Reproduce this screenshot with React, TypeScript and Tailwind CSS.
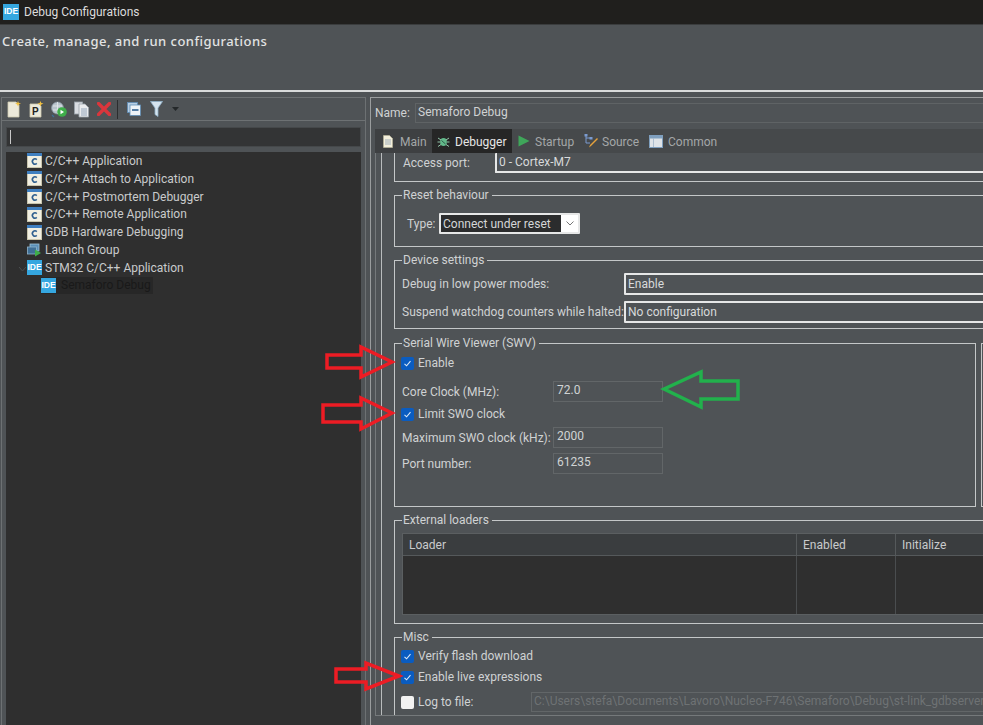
import type { ReactNode } from "react"

const treeItems = [
  "C/C++ Application",
  "C/C++ Attach to Application",
  "C/C++ Postmortem Debugger",
  "C/C++ Remote Application",
  "GDB Hardware Debugging",
]

function IdeIcon({ size = 16 }: { size?: number }) {
  return (
    <span
      className="flex shrink-0 items-center justify-center bg-[#35a7e0] text-[8.5px] font-bold leading-none text-white font-['Liberation_Sans',sans-serif]"
      style={{ width: size, height: size }}
    >
      IDE
    </span>
  )
}

function CIcon() {
  return (
    <svg width="15" height="15" viewBox="0 0 15 15" className="shrink-0">
      <rect x="0.5" y="0.5" width="14" height="14" fill="#f1efe2" stroke="#c9c5ad" />
      <rect x="0" y="0" width="15" height="3" fill="#3f7fc0" />
      <path d="M9.8 6.6 A2.6 2.6 0 1 0 9.8 10.4" fill="none" stroke="#2f5f8f" strokeWidth="1.6" />
    </svg>
  )
}

function LaunchGroupIcon() {
  return (
    <svg width="15" height="15" viewBox="0 0 15 15" className="shrink-0">
      <rect x="3" y="2" width="9" height="7" fill="#5a8fb8" stroke="#9dc0d8" strokeWidth="0.8" />
      <rect x="0.5" y="5" width="9" height="7" fill="#3f6f96" stroke="#8fb4cd" strokeWidth="0.8" />
      <path d="M8 7.5 L14 11 L8 14.5 Z" fill="#3fae4a" />
    </svg>
  )
}

function ToolbarIcons() {
  return (
    <div className="flex h-[22px] items-center pl-[5px]">
      <svg width="14" height="17" viewBox="0 0 14 17" className="shrink-0">
        <path d="M1 1 H9 L12 4 V16 H1 Z" fill="#ece9da" stroke="#cfcab0" strokeWidth="0.8" />
        <path d="M11 0 L11.8 2 L14 2.6 L11.8 3.4 L11 5.5 L10.2 3.4 L8 2.6 L10.2 2 Z" fill="#f0c040" />
      </svg>
      <svg width="15" height="17" viewBox="0 0 15 17" className="ml-[8px] shrink-0">
        <path d="M1 3 H10 L12 5 V16 H1 Z" fill="#ece9da" stroke="#cfcab0" strokeWidth="0.8" />
        <text x="3" y="14" fontSize="10" fontWeight="700" fill="#222" fontFamily="Liberation Sans">P</text>
        <path d="M11.5 0 L12.3 2 L14.5 2.6 L12.3 3.4 L11.5 5.5 L10.7 3.4 L8.5 2.6 L10.7 2 Z" fill="#f0c040" />
      </svg>
      <svg width="16" height="17" viewBox="0 0 16 17" className="ml-[7px] shrink-0">
        <circle cx="6.5" cy="7" r="6" fill="#b9c4cc" stroke="#8b98a3" strokeWidth="0.7" />
        <path d="M2 5 H11 M2 9 H11 M6.5 1 V13" stroke="#e6ebee" strokeWidth="0.8" />
        <circle cx="11" cy="11" r="4.8" fill="#3fae4a" />
        <path d="M9.5 8.8 L13 11 L9.5 13.2 Z" fill="#fff" />
        <path d="M1 14 L3 16" stroke="#3f6f96" strokeWidth="1.2" />
      </svg>
      <svg width="15" height="17" viewBox="0 0 15 17" className="ml-[7px] shrink-0">
        <rect x="0.5" y="1" width="8" height="12" fill="#d9dde2" stroke="#9aa3ab" strokeWidth="0.8" />
        <path d="M5 3 H11 L14.5 6.5 V16 H5 Z" fill="#e9ebed" stroke="#9aa3ab" strokeWidth="0.8" />
        <path d="M7 8 H13 M7 10 H13 M7 12 H13 M7 14 H13" stroke="#7f96ad" strokeWidth="0.8" />
      </svg>
      <svg width="14" height="14" viewBox="0 0 14 14" className="ml-[8px] shrink-0">
        <path d="M1.5 1.5 L12.5 12.5 M12.5 1.5 L1.5 12.5" stroke="#d9363c" strokeWidth="3.4" strokeLinecap="round" />
      </svg>
      <div className="ml-[6px] h-[19px] w-[1px] bg-[#2c2e2f]" />
      <svg width="14" height="14" viewBox="0 0 14 14" className="ml-[9px] shrink-0">
        <rect x="0.5" y="0.5" width="10" height="10" fill="#b8cfe4" stroke="#5f8db5" strokeWidth="0.8" />
        <rect x="3" y="3" width="10.5" height="10.5" fill="#eef3f7" stroke="#5f8db5" strokeWidth="0.8" />
        <path d="M5 8 H11.5" stroke="#2f5f8f" strokeWidth="1.6" />
      </svg>
      <svg width="13" height="16" viewBox="0 0 13 16" className="ml-[9px] shrink-0">
        <path d="M0.5 0.5 H12.5 L8 7 V15.5 L5 13.5 V7 Z" fill="#d5e4ef" stroke="#8fb0c8" strokeWidth="0.8" />
      </svg>
      <svg width="7" height="4" viewBox="0 0 7 4" className="ml-[9px] shrink-0">
        <path d="M0 0 H7 L3.5 4 Z" fill="#24282a" />
      </svg>
    </div>
  )
}

function Group({
  title,
  height,
  width = "w-[700px]",
  className = "",
  children,
}: {
  title: string
  height: string
  width?: string
  className?: string
  children: ReactNode
}) {
  return (
    <fieldset className={`shrink-0 border border-[#c4c7c8] ${height} ${width} ${className}`}>
      <legend className="ml-[7px] pl-[1px] pr-[3px] text-[12px] leading-[16px] text-[#cfd2d3]">
        {title}
      </legend>
      {children}
    </fieldset>
  )
}

function Check({ on = true }: { on?: boolean }) {
  if (!on) {
    return <span className="block h-[13px] w-[13px] shrink-0 rounded-[2px] bg-[#f2f2f2]" />
  }
  return (
    <span className="flex h-[13px] w-[13px] shrink-0 items-center justify-center rounded-[2px] bg-[#0a5cc0]">
      <svg width="9" height="9" viewBox="0 0 9 9">
        <path d="M1.5 4.8 L3.6 6.8 L7.5 2.2" fill="none" stroke="#dbe8f6" strokeWidth="1.1" />
      </svg>
    </span>
  )
}

function CheckRow({ label, on, className = "" }: { label: string; on?: boolean; className?: string }) {
  return (
    <div className={`-ml-[1px] flex h-[13px] items-center gap-[4px] ${className}`}>
      <Check on={on} />
      <span className="whitespace-nowrap text-[12px] leading-[13px] text-[#cfd2d3]">{label}</span>
    </div>
  )
}

function WhiteField({ value, className = "" }: { value: string; className?: string }) {
  return (
    <div className={`flex items-center rounded-[1px] border-2 border-[#e6e7e7] pl-[2px] text-[12px] text-[#d8dadb] ${className}`}>
      {value}
    </div>
  )
}

function SwvField({ value }: { value: string }) {
  return (
    <div className="ml-auto h-[21px] w-[110px] border border-[#626668] pl-[3px] text-[12px] leading-[16px] text-[#d0d3d4]">
      {value}
    </div>
  )
}

function Arrow({ d, color, className }: { d: string; color: string; className: string }) {
  return (
    <svg className={`absolute ${className}`} width="100" height="50" viewBox="0 0 100 50">
      <path d={d} fill="none" stroke={color} strokeWidth="3.5" strokeLinejoin="miter" />
    </svg>
  )
}

export default function App() {
  return (
    <div className="relative h-[725px] w-[983px] overflow-hidden bg-[#4f5356] font-['Roboto',sans-serif]">
      <div className="flex h-[24px] items-center bg-[#201f1d] pb-[1px] pl-[3px]">
        <IdeIcon size={16} />
        <span className="ml-[5px] text-[12px] text-[#dcdcdc]">Debug Configurations</span>
      </div>

      <div className="h-[66px] border-t border-[#3a3c3d] pl-[2px] pt-[4px]">
        <span className="text-[13px] font-medium leading-[18px] tracking-[0.45px] text-[#e2e3e3] font-['Noto_Sans',sans-serif]">
          Create, manage, and run configurations
        </span>
      </div>
      <div className="h-[2px] bg-[#d9dbdb]" />

      <div className="flex h-[633px] pt-[5px]">
        <div className="ml-[1px] flex h-full w-[365px] shrink-0 flex-col border-l border-r border-t border-[#6d7173]">
          <ToolbarIcons />
          <div className="h-[1px] bg-[#6d7173]" />
          <div className="ml-[4px] mr-[4px] mt-[6px] flex h-[20px] items-center border border-[#45484a] bg-[#333435] pl-[3px]">
            <div className="h-[14px] w-[1px] bg-[#c9c9c9]" />
          </div>
          <div className="ml-[4px] mr-[4px] mt-[5px] flex-1 bg-[#2f2f2f] pl-[21px] text-[12px] text-[#c9cbcc]">
            {treeItems.map((item) => (
              <div key={item} className="flex h-[17.8px] items-center gap-[3px]">
                <CIcon />
                <span>{item}</span>
              </div>
            ))}
            <div className="flex h-[17.8px] items-center gap-[3px]">
              <LaunchGroupIcon />
              <span>Launch Group</span>
            </div>
            <div className="relative flex h-[17.8px] items-center gap-[3px]">
              <svg width="9" height="6" viewBox="0 0 9 6" className="absolute left-[-9px] top-[7px]">
                <path d="M1 1 L4.5 5 L8 1" fill="none" stroke="#4a4d4f" strokeWidth="1" />
              </svg>
              <IdeIcon size={15} />
              <span>STM32 C/C++ Application</span>
            </div>
            <div className="ml-[14px] flex h-[17.8px] w-[112px] items-center gap-[5px] bg-[#272727]">
              <IdeIcon size={15} />
              <span className="whitespace-nowrap text-[#191919]">Semaforo Debug</span>
            </div>
          </div>
        </div>

        <div className="ml-[4px] flex h-full w-[700px] shrink-0 flex-col border-l border-t border-[#9a9d9e]">
          <div className="mt-[5px] flex h-[20px] items-center pl-[4px]">
            <span className="w-[40px] text-[12px] text-[#cfd2d3]">Name:</span>
            <div className="h-[20px] flex-1 border border-[#5f6365] pl-[2px] text-[12px] leading-[17px] text-[#cfd2d3]">
              Semaforo Debug
            </div>
          </div>

          <div className="ml-[4px] mt-[6px] flex h-[24px] items-center bg-[#46494b] text-[12px] text-[#a4a7a8]">
            <div className="flex h-full w-[57px] items-center bg-[#3e4042] pl-[8px]">
              <svg width="10" height="13" viewBox="0 0 10 13">
                <path d="M0.5 0.5 H6.5 L9.5 3.5 V12.5 H0.5 Z" fill="#f3efdc" stroke="#b7b39a" strokeWidth="0.7" />
                <path d="M2 5 H8 M2 7 H8 M2 9 H8" stroke="#7f96ad" strokeWidth="0.7" />
              </svg>
              <span className="ml-[7px] pt-[2px]">Main</span>
            </div>
            <div className="flex h-full w-[80px] items-center bg-[#262626] pl-[5px] text-[#e6e6e6]">
              <svg width="13" height="13" viewBox="0 0 13 13">
                <ellipse cx="6.5" cy="7" rx="3.4" ry="4" fill="#62b98a" />
                <path d="M1 3 L4 5 M12 3 L9 5 M0.5 7 H3 M12.5 7 H10 M1 11.5 L4 9.5 M12 11.5 L9 9.5" stroke="#9fd6b8" strokeWidth="0.9" />
                <path d="M4.5 5.5 L8.5 9" stroke="#24423a" strokeWidth="0.8" />
              </svg>
              <span className="ml-[5px] pt-[2px]">Debugger</span>
            </div>
            <div className="flex w-[72px] items-center pl-[6px]">
              <svg width="12" height="12" viewBox="0 0 12 12">
                <path d="M0.5 0.5 L11.5 6 L0.5 11.5 Z" fill="#3fa65a" />
              </svg>
              <span className="ml-[5px] pt-[2px]">Startup</span>
            </div>
            <div className="flex w-[65px] items-center">
              <svg width="15" height="14" viewBox="0 0 15 14">
                <path d="M2 1 V9 M2 4 H6 M2 9 H6" stroke="#7b9bd0" strokeWidth="1" fill="none" />
                <rect x="0.5" y="0" width="3" height="2.5" fill="#7b9bd0" />
                <rect x="5.5" y="3" width="3" height="2.5" fill="#7b9bd0" />
                <path d="M14 5 L7 12 L5 13.5 L6 11 L13 4 Z" fill="#e5a23c" />
              </svg>
              <span className="ml-[3px] pt-[2px]">Source</span>
            </div>
            <svg width="14" height="13" viewBox="0 0 14 13">
              <rect x="0.5" y="0.5" width="13" height="12" fill="#dfe3e7" stroke="#7f9fbe" />
              <rect x="1" y="1" width="12" height="2.5" fill="#7f9fbe" />
              <path d="M4.5 3.5 V12" stroke="#9fb4c8" strokeWidth="0.8" />
            </svg>
            <span className="ml-[5px] pt-[2px]">Common</span>
          </div>

          <div className="ml-[4px] h-[563px] overflow-hidden border-b border-l border-[#75797b] pl-[5px]">
            <div className="flex h-full flex-col border-l border-[#b9bcbd] pl-[12px]">
              <div className="h-[29px] w-[700px] shrink-0 border-b border-l border-[#c4c7c8] pl-[8px]">
                <div className="flex h-[20px] items-center">
                  <span className="w-[92px] text-[12px] text-[#cfd2d3]">Access port:</span>
                  <WhiteField value="0 - Cortex-M7" className="h-[20px] flex-1 border-t-0" />
                </div>
              </div>

              <Group title="Reset behaviour" height="h-[60px]" className="mt-[5px]">
                <div className="ml-[12px] mt-[10px] flex items-center">
                  <span className="w-[32px] text-[12px] text-[#cfd2d3]">Type:</span>
                  <div className="flex h-[21px] w-[141px] items-center overflow-hidden rounded-[1px] border-2 border-[#e6e7e7] bg-[#2b2c2d]">
                    <span className="flex-1 whitespace-nowrap pl-[2px] text-[12px] text-[#d4d6d7]">Connect under reset</span>
                    <div className="flex h-full w-[17px] items-center justify-center bg-white">
                      <svg width="8" height="5" viewBox="0 0 8 5">
                        <path d="M0.5 0.5 L4 4 L7.5 0.5" fill="none" stroke="#777" strokeWidth="1" />
                      </svg>
                    </div>
                  </div>
                </div>
              </Group>

              <Group title="Device settings" height="h-[77px]" className="mt-[5px]">
                <div className="ml-[7px] mt-[5px] flex items-center">
                  <span className="w-[222px] text-[12px] text-[#cfd2d3]">Debug in low power modes:</span>
                  <WhiteField value="Enable" className="h-[22px] flex-1" />
                </div>
                <div className="ml-[7px] mt-[6px] flex items-center">
                  <span className="w-[222px] whitespace-nowrap text-[12px] text-[#cfd2d3]">
                    Suspend watchdog counters while halted:
                  </span>
                  <WhiteField value="No configuration" className="h-[22px] flex-1" />
                </div>
              </Group>

              <div className="mt-[6px] flex w-[700px] shrink-0 gap-[5px]">
                <Group title="Serial Wire Viewer (SWV)" height="h-[172px]" width="w-[582px]">
                  <div className="w-[268px] pl-[7px]">
                    <CheckRow label="Enable" className="mt-[6px]" />
                    <div className="mt-[11px] flex items-center">
                      <span className="text-[12px] text-[#cfd2d3]">Core Clock (MHz):</span>
                      <SwvField value="72.0" />
                    </div>
                    <CheckRow label="Limit SWO clock" className="mt-[6px]" />
                    <div className="mt-[6px] flex items-center">
                      <span className="whitespace-nowrap text-[12px] text-[#cfd2d3]">Maximum SWO clock (kHz):</span>
                      <SwvField value="2000" />
                    </div>
                    <div className="mt-[5px] flex items-center">
                      <span className="text-[12px] text-[#cfd2d3]">Port number:</span>
                      <SwvField value="61235" />
                    </div>
                  </div>
                </Group>
                <div className="mt-[8px] h-[164px] flex-1 border border-[#c4c7c8]" />
              </div>

              <Group title="External loaders" height="h-[112px]" className="mt-[5px]">
                <div className="ml-[7px] mt-[5px] h-[82px] border border-[#5b5f61] bg-[#2f2f2f] text-[12px] text-[#c9cbcc]">
                  <div className="grid h-[22px] grid-cols-[394px_99px_1fr] border-b border-[#55595b] bg-[#3a3d3f] leading-[22px]">
                    <span className="border-r border-[#55595b] pl-[6px]">Loader</span>
                    <span className="border-r border-[#55595b] pl-[6px]">Enabled</span>
                    <span className="pl-[6px]">Initialize</span>
                  </div>
                  <div className="grid h-[58px] grid-cols-[394px_99px_1fr]">
                    <div className="border-r border-[#4a4d4f]" />
                    <div className="border-r border-[#4a4d4f]" />
                    <div />
                  </div>
                </div>
              </Group>

              <Group title="Misc" height="h-[110px]" className="mt-[5px]">
                <div className="pl-[7px]">
                  <CheckRow label="Verify flash download" className="mt-[5px]" />
                  <CheckRow label="Enable live expressions" className="mt-[8px]" />
                  <div className="mt-[8px] flex items-center">
                    <div className="w-[129px]">
                      <CheckRow label="Log to file:" on={false} />
                    </div>
                    <div className="h-[20px] flex-1 overflow-hidden whitespace-nowrap border border-[#626668] pl-[2px] text-[12px] leading-[17px] text-[#6e7274]">
                      C:\Users\stefa\Documents\Lavoro\Nucleo-F746\Semaforo\Debug\st-link_gdbserver_log.txt
                    </div>
                  </div>
                </div>
              </Group>
            </div>
          </div>
        </div>
      </div>

      <Arrow
        className="left-[320px] top-[340px]"
        color="#ed1c24"
        d="M7 15 H41 V7 L72 22 L41 37 V28 H7 Z"
      />
      <Arrow
        className="left-[320px] top-[391px]"
        color="#ed1c24"
        d="M3 14 H41 V7 L72 22 L41 38 V31 H3 Z"
      />
      <Arrow
        className="left-[330px] top-[653px]"
        color="#ed1c24"
        d="M6 16 H36 V10 L69 23 L36 36 V29 H6 Z"
      />
      <Arrow
        className="left-[660px] top-[367px]"
        color="#22b14c"
        d="M4 22 L41 5 V14 H78 V32 H41 V40 Z"
      />
    </div>
  )
}
